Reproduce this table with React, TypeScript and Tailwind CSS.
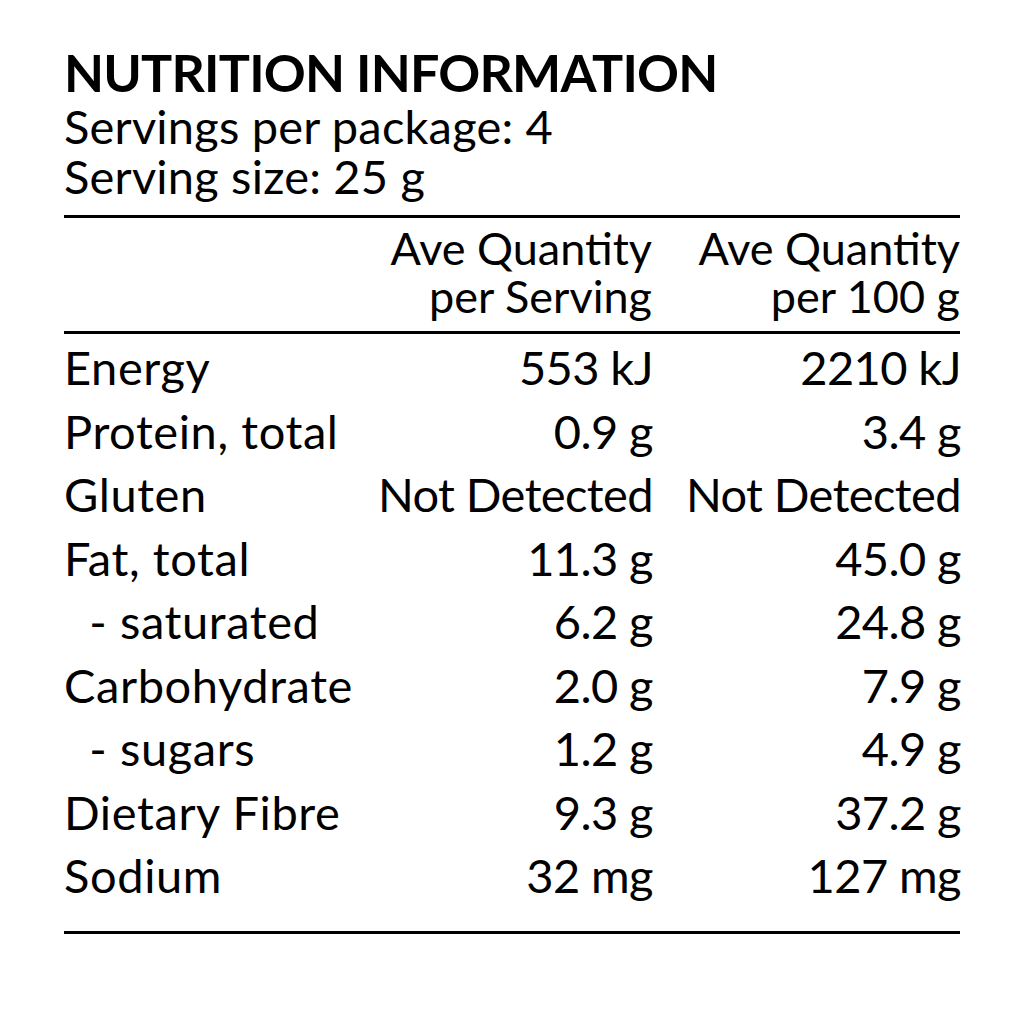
const rows: [string, string, string][] = [
  ['Energy', '553 kJ', '2210 kJ'],
  ['Protein, total', '0.9 g', '3.4 g'],
  ['Gluten', 'Not Detected', 'Not Detected'],
  ['Fat, total', '11.3 g', '45.0 g'],
  ['\u00a0\u00a0- saturated', '6.2 g', '24.8 g'],
  ['Carbohydrate', '2.0 g', '7.9 g'],
  ['\u00a0\u00a0- sugars', '1.2 g', '4.9 g'],
  ['Dietary Fibre', '9.3 g', '37.2 g'],
  ['Sodium', '32 mg', '127 mg'],
];

export default function App() {
  return (
    <div className="w-[1024px] h-[1024px] bg-white text-black font-['Lato',sans-serif]">
      <div className="w-[896px] ml-[64px] pt-[43px]">
        <h1 className="text-[52px] font-bold leading-[58px] tracking-[-0.8px]">NUTRITION INFORMATION</h1>
        <div className="text-[47px] leading-[50px] tracking-[0.2px]">
          <p>Servings per package: 4</p>
          <p>Serving size: 25 g</p>
        </div>

        <div className="mt-[14px] border-t-[3px] border-black" />
        <div className="grid grid-cols-[1fr_300px_308px] text-[45px] leading-[48px] pt-[6px] pb-[11px]">
          <div />
          <div className="text-right">
            <p>Ave Quantity</p>
            <p>per Serving</p>
          </div>
          <div className="text-right">
            <p>Ave Quantity</p>
            <p>per 100 g</p>
          </div>
        </div>
        <div className="border-t-[3px] border-black" />

        <div className="grid grid-cols-[1fr_300px_308px] text-[47px] leading-[63.5px] pt-[2px] pb-[23px]">
          {rows.map(([label, serving, per100]) => (
            <div key={label} className="contents">
              <div className="whitespace-pre tracking-[0.6px]">{label}</div>
              <div className="text-right tracking-[-0.6px]">{serving}</div>
              <div className="text-right tracking-[-0.6px]">{per100}</div>
            </div>
          ))}
        </div>
        <div className="border-t-[3px] border-black" />
      </div>
    </div>
  );
}
